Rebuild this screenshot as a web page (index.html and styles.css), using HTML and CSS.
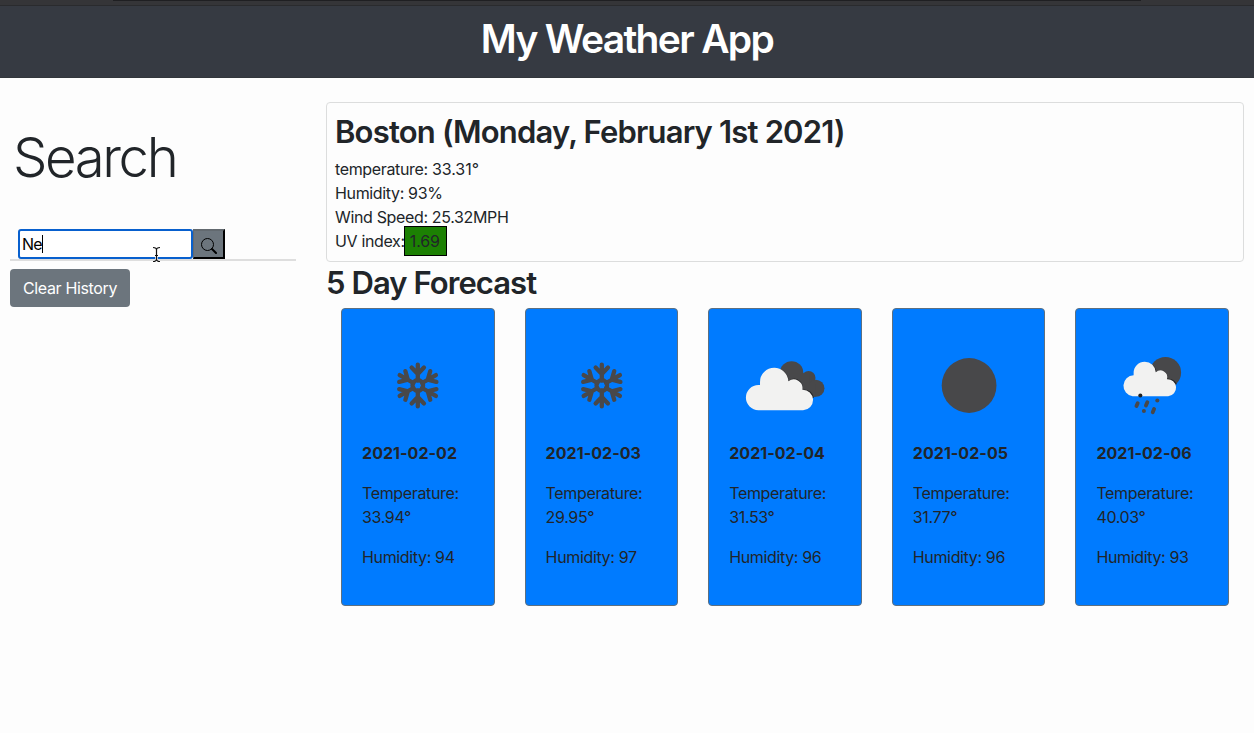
FILE: index.html
```html
<!DOCTYPE html>
<html lang="en">
<head>
<meta charset="utf-8">
<title>My Weather App</title>
<link rel="stylesheet" href="styles.css">
</head>
<body>
<svg class="defs" width="0" height="0" aria-hidden="true">
  <defs>
    <g id="arm"><path d="M0-5V-21M-6.200-18L0-11.500L6.200-18"/></g>
    <symbol id="snow" viewBox="0 0 112 112">
      <g transform="translate(56 56.700)" fill="none" stroke="#48484a" stroke-width="4.300" stroke-linecap="round" stroke-linejoin="round">
        <circle r="5.300" />
        <use href="#arm"/><use href="#arm" transform="rotate(60)"/><use href="#arm" transform="rotate(120)"/>
        <use href="#arm" transform="rotate(180)"/><use href="#arm" transform="rotate(240)"/><use href="#arm" transform="rotate(300)"/>
      </g>
    </symbol>
  </defs>
</svg>
<div class="chrome"><div class="chrome-bar"></div></div>
<header class="header"><h1 class="title"><span>My Weather App</span></h1></header>
<main class="layout">
  <aside class="sidebar">
    <h1 class="search-title">Search</h1>
    <div class="search-row">
      <div class="field"><span class="typed">Ne</span><i class="caret"></i>
        <svg class="ibeam" width="9" height="17" viewBox="0 0 9 17"><path d="M1 1.500Q4.500 1.500 4.500 4V13Q4.500 15.500 1 15.500M8 1.500Q4.500 1.500 4.500 4M8 15.500Q4.500 15.500 4.500 13M3 9.500H6" fill="none" stroke="#fff" stroke-width="2.600"/><path d="M1 1.500Q4.500 1.500 4.500 4V13Q4.500 15.500 1 15.500M8 1.500Q4.500 1.500 4.500 4M8 15.500Q4.500 15.500 4.500 13M3 9.500H6" fill="none" stroke="#111" stroke-width="1.200"/></svg>
      </div>
      <button class="go" aria-label="Search"><svg width="16" height="16" viewBox="0 0 16 16"><circle cx="6.500" cy="6.500" r="6" fill="none" stroke="#000"/><path d="M11 11L15 15" stroke="#000" stroke-width="2" stroke-linecap="round"/></svg></button>
    </div>
    <div class="rule"></div>
    <button class="clear">Clear History</button>
  </aside>
  <section class="content">
    <div class="current">
      <h2 class="city">Boston (Monday, February 1st 2021)</h2>
      <div>temperature: <span class="num">33.31°</span></div>
      <div>Humidity: 93%</div>
      <div>Wind Speed: 25.32MPH</div>
      <div class="uv-row">UV index:<span class="uv">1.69</span></div>
    </div>
    <h2 class="forecast-title">5 Day Forecast</h2>
    <div class="days">
      <article class="day">
        <svg class="icon" viewBox="0 0 112 112"><use href="#snow"/></svg>
        <p class="date">2021-02-02</p><p>Temperature: 33.94°</p><p>Humidity: 94</p>
      </article>
      <article class="day">
        <svg class="icon" viewBox="0 0 112 112"><use href="#snow"/></svg>
        <p class="date">2021-02-03</p><p>Temperature: 29.95°</p><p>Humidity: 97</p>
      </article>
      <article class="day">
        <svg class="icon" viewBox="0 0 112 112"><g transform="translate(-0.700 -0.400) scale(1.020)">
          <g fill="#48484a"><circle cx="62.300" cy="43.500" r="11.500"/><circle cx="79" cy="48.600" r="6.800"/><circle cx="86.200" cy="58.600" r="8.400"/><path d="M60 44H80V67H60ZM78 55H86V67H78Z"/></g>
          <path d="M55 42.500Q59 46 59.500 51.200Q65.500 46.700 71 52Q73.900 55.500 73.300 59.600Q82.500 60 84.300 68L60 72Z" fill="#242426"/>
          <path fill="#f2f2f1" d="M45.200 38.500a14 14 0 0 1 13.900 13.200a8.700 8.700 0 0 1 13.800 8.400a10.100 10.100 0 0 1 0.700 20.200H29.700a12.400 12.400 0 0 1 0-24.800h1.500V52.500a14 14 0 0 1 14-14Z"/></g>
        </svg>
        <p class="date">2021-02-04</p><p>Temperature: 31.53°</p><p>Humidity: 96</p>
      </article>
      <article class="day">
        <svg class="icon" viewBox="0 0 112 112"><circle cx="56.300" cy="56.700" r="27.500" fill="#48484a"/></svg>
        <p class="date">2021-02-05</p><p>Temperature: 31.77°</p><p>Humidity: 96</p>
      </article>
      <article class="day">
        <svg class="icon" viewBox="0 0 112 112"><g transform="translate(-1 -0.200) scale(1.020)">
          <circle cx="69.300" cy="43.100" r="15.400" fill="#48484a"/>
          <path d="M56.700 35.500Q60.200 38.500 60.300 42.200Q65.200 38.800 69.600 43Q71.900 46 71.400 49Q78 49.200 80.500 54.500L60 60Z" fill="#242426"/>
          <path fill="#f2f2f1" d="M48.900 32.300a10.900 10.900 0 0 1 10.900 10.500a6.700 6.700 0 0 1 11 6.800a8.300 8.300 0 0 1 1.200 16.700H37a10.400 10.400 0 0 1 1-20.700V43.200a10.900 10.900 0 0 1 10.900-10.900Z"/>
          <path d="M42 73.300L40.800 76M51.500 72.300L50.100 75.500M58.100 79L56.800 82" stroke="#48484a" stroke-width="3.800" stroke-linecap="round"/>
          <g fill="#48484a"><circle cx="61.300" cy="70.600" r="2"/><circle cx="48.100" cy="80.900" r="2"/><circle cx="44.600" cy="65.600" r="2" fill="#222"/></g></g>
        </svg>
        <p class="date">2021-02-06</p><p>Temperature: 40.03°</p><p>Humidity: 93</p>
      </article>
    </div>
  </section>
</main>
</body>
</html>
```
FILE: styles.css
```css
*, *::before, *::after { box-sizing: border-box; }
body {
  margin: 0;
  background: #fdfdfd;
  color: #212529;
  font: 400 16px/24px Inter, "Liberation Sans", sans-serif;
  letter-spacing: -0.35px;
  overflow: hidden;
}
h1, h2, p { margin: 0; }
.defs { display: block; height: 0; }
.chrome { height: 6px; background: #353538; border-bottom: 1px solid #2a2b2e; }
.chrome-bar { height: 1px; margin: 0 113px; background: #1f1f22; }
.header {
  height: 72px;
  padding-top: 9px;
  background: #363a42;
  border-bottom: 1px solid #32363b;
  color: #fff;
  text-align: center;
}
.title { font-size: 39px; line-height: 48px; font-weight: 600; letter-spacing: -1.68px; }
.layout { display: flex; gap: 30px; padding: 24px 10px 0; }
.sidebar { width: 286px; flex: none; padding-top: 22px; }
.search-title {
  padding-left: 3px;
  font-size: 54.5px;
  line-height: 67px;
  font-weight: 350;
  letter-spacing: -2.4px;
}
.search-row { display: flex; margin: 38px 0 0 8px; height: 30px; }
.field {
  position: relative;
  display: flex;
  align-items: center;
  width: 175px;
  padding: 0 2px;
  border: 2px solid #0860ce;
  border-radius: 3px;
  background: #fff;
  color: #000;
}
.typed { letter-spacing: -0.8px; }
.caret { width: 1px; height: 18px; background: #000; }
.ibeam { position: absolute; left: 132px; top: 15px; z-index: 1; }
.go {
  width: 32px;
  padding: 3px 0 0;
  border: 2px outset #6c757d;
  border-color: #62696f #1e2124 #1e2124 #62696f;
  border-left-width: 1px;
  background: #6c757d;
  line-height: 0;
}
.rule { height: 2px; background: #dedede; }
.clear {
  margin-top: 8px;
  width: 120px;
  height: 38px;
  padding: 0;
  border: 0;
  border-radius: 4px;
  background: #6c757d;
  color: #fff;
  font: inherit;
  letter-spacing: inherit;
}
.content { flex: 1; min-width: 0; }
.current {
  height: 160px;
  padding: 8px;
  border: 1px solid #dcdddd;
  border-radius: 4px;
}
.city, .forecast-title {
  padding-top: 2px;
  margin-bottom: 6px;
  font-size: 31px;
  line-height: 38.4px;
  font-weight: 600;
  letter-spacing: -0.82px;
}
.forecast-title { letter-spacing: -0.93px; }
.num { letter-spacing: -0.05px; }
.uv { display: inline-block; height: 30px; margin: -3px 0 -3px -1px; padding: 2px 6px 2px 5px; border: 1px solid #000; background: #1c8003; letter-spacing: -0.1px; }
.days { display: grid; grid-template-columns: repeat(5, 1fr); }
.day {
  margin: 0 15px;
  padding: 20px;
  border: 1px solid #5d7081;
  border-radius: 4px;
  background: #007bff;
}
.icon { display: block; width: 100%; aspect-ratio: 1; }
.day p { margin-bottom: 16px; }
.day .date { font-weight: 700; letter-spacing: 0.05px; }
```
